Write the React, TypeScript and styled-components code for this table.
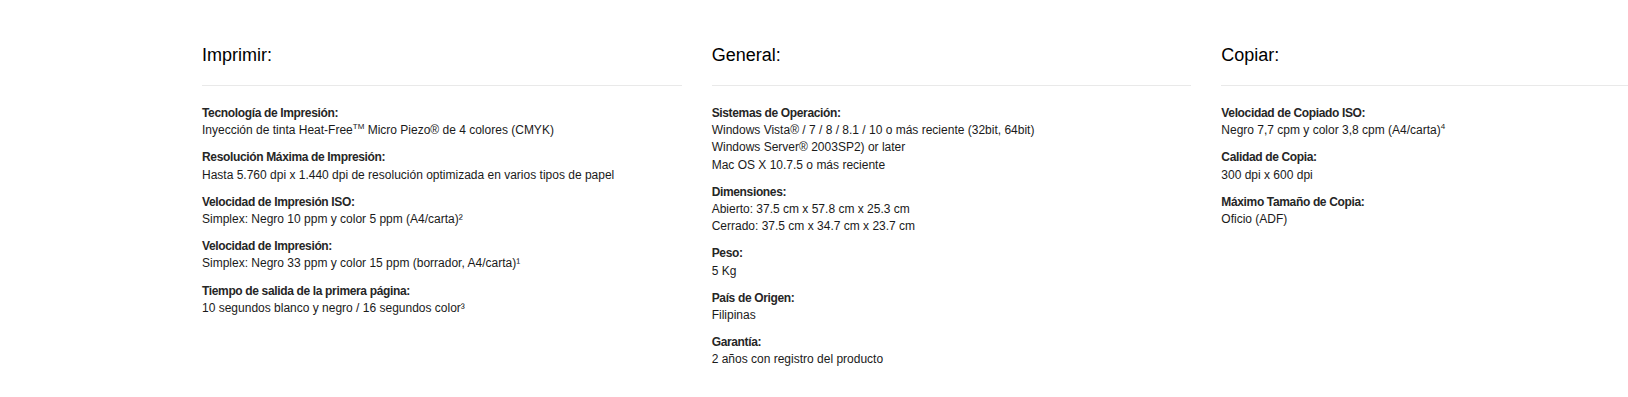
import React from "react";
import styled, { createGlobalStyle } from "styled-components";

const GlobalStyle = createGlobalStyle`
  html, body {
    margin: 0;
    padding: 0;
    background: #ffffff;
    overflow: hidden;
  }
  body {
    font-family: "Liberation Sans", Arial, sans-serif;
  }
`;

const Page = styled.div`
  padding: 45px 0 0 187px;
  width: 1700px;
`;

const Row = styled.div`
  display: flex;
  width: 1529px;
`;

const Column = styled.section`
  box-sizing: border-box;
  flex: 0 0 33.333%;
  padding: 0 15px;
`;

const Heading = styled.h3`
  margin: 0;
  font-size: 18px;
  line-height: 20px;
  font-weight: 400;
  color: #000000;
`;

const Divider = styled.hr`
  margin: 20px 0 19px;
  border: 0;
  border-top: 1px solid #e9e9e9;
  height: 0;
`;

const SpecList = styled.dl`
  margin: 0;
  display: flex;
  flex-direction: column;
  gap: 10px;
`;

const Spec = styled.div`
  font-size: 12px;
  line-height: 17.2px;
`;

const Label = styled.dt`
  font-weight: 700;
  color: #262626;
  letter-spacing: -0.35px;
`;

const Value = styled.dd`
  margin: 0;
  color: #1a1a1a;

  sup {
    font-size: 8px;
    line-height: 0;
    vertical-align: 5px;
  }
`;

type SpecItem = {
    label: string
    lines: React.ReactNode[]
};

type Group = {
    title: string
    items: SpecItem[]
};

const groups: Group[] = [
    {
        title: "Imprimir:",
        items: [
            {
                label: "Tecnología de Impresión:",
                lines: [<>Inyección de tinta Heat-Free<sup>TM</sup> Micro Piezo® de 4 colores (CMYK)</>],
            },
            {
                label: "Resolución Máxima de Impresión:",
                lines: ["Hasta 5.760 dpi x 1.440 dpi de resolución optimizada en varios tipos de papel"],
            },
            {
                label: "Velocidad de Impresión ISO:",
                lines: ["Simplex: Negro 10 ppm y color 5 ppm (A4/carta)²"],
            },
            {
                label: "Velocidad de Impresión:",
                lines: ["Simplex: Negro 33 ppm y color 15 ppm (borrador, A4/carta)¹"],
            },
            {
                label: "Tiempo de salida de la primera página:",
                lines: ["10 segundos blanco y negro / 16 segundos color³"],
            },
        ],
    },
    {
        title: "General:",
        items: [
            {
                label: "Sistemas de Operación:",
                lines: [
                    "Windows Vista® / 7 / 8 / 8.1 / 10 o más reciente (32bit, 64bit)",
                    "Windows Server® 2003SP2) or later",
                    "Mac OS X 10.7.5 o más reciente",
                ],
            },
            {
                label: "Dimensiones:",
                lines: ["Abierto: 37.5 cm x 57.8 cm x 25.3 cm", "Cerrado: 37.5 cm x 34.7 cm x 23.7 cm"],
            },
            { label: "Peso:", lines: ["5 Kg"] },
            { label: "País de Origen:", lines: ["Filipinas"] },
            { label: "Garantía:", lines: ["2 años con registro del producto"] },
        ],
    },
    {
        title: "Copiar:",
        items: [
            {
                label: "Velocidad de Copiado ISO:",
                lines: [<>Negro 7,7 cpm y color 3,8 cpm (A4/carta)<sup>4</sup></>],
            },
            { label: "Calidad de Copia:", lines: ["300 dpi x 600 dpi"] },
            { label: "Máximo Tamaño de Copia:", lines: ["Oficio (ADF)"] },
        ],
    },
];

const App = () => {
    return <>
        <GlobalStyle/>
        <Page>
            <Row>
                {groups.map((group) => <Column key={group.title}>
                    <Heading>{group.title}</Heading>
                    <Divider/>
                    <SpecList>
                        {group.items.map((item) => <Spec key={item.label}>
                            <Label>{item.label}</Label>
                            {item.lines.map((line, i) => <Value key={i}>{line}</Value>)}
                        </Spec>)}
                    </SpecList>
                </Column>)}
            </Row>
        </Page>
    </>
};

export default App;
